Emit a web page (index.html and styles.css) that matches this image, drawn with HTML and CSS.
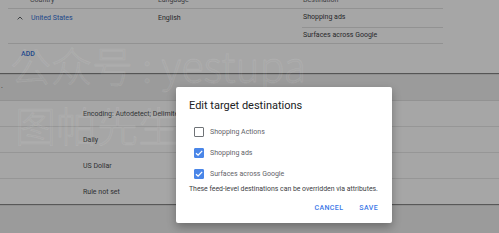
FILE: index.html
```html
<!DOCTYPE html>
<html lang="en">
<head>
<meta charset="utf-8">
<title>Edit target destinations</title>
<link rel="stylesheet" href="styles.css">
</head>
<body>
<div class="page">
  <section class="card card-top">
    <div class="grid head">
      <div class="c1 pad">Country</div>
      <div class="c2">Language</div>
      <div class="c3">Destination</div>
    </div>
    <div class="grid row">
      <div class="c1 country">
        <svg class="chev" width="6" height="4" viewBox="0 0 6 4"><path d="M0.6 3.4 L3 1 L5.4 3.4" fill="none" stroke="#5f6368" stroke-width="1"/></svg>
        <span class="link">United States</span>
      </div>
      <div class="c2 cell">English</div>
      <div class="c3 dests">
        <div class="dest first">Shopping ads</div>
        <div class="dest">Surfaces across Google</div>
      </div>
    </div>
    <div class="add">ADD</div>
  </section>
  <div class="between">.</div>
  <section class="card card-settings">
    <div class="srow">Encoding: Autodetect; Delimiter: Autodetect</div>
    <div class="srow">Daily</div>
    <div class="srow">US Dollar</div>
    <div class="srow last">Rule not set</div>
  </section>
</div>
<div class="overlay"></div>
<div class="watermark">
  <div class="wm1">公众号 : yestupa</div>
  <div class="wm2">图帕先生</div>
</div>
<div class="dialog">
  <h2 class="title">Edit target destinations</h2>
  <ul class="options">
    <li class="opt"><span class="box"></span><span>Shopping Actions</span></li>
    <li class="opt"><span class="box on"><svg width="10" height="10" viewBox="0 0 10 10"><path d="M2 5.2 L4.1 7.2 L8.2 2.9" fill="none" stroke="#fff" stroke-width="1.3"/></svg></span><span>Shopping ads</span></li>
    <li class="opt"><span class="box on"><svg width="10" height="10" viewBox="0 0 10 10"><path d="M2 5.2 L4.1 7.2 L8.2 2.9" fill="none" stroke="#fff" stroke-width="1.3"/></svg></span><span>Surfaces across Google</span></li>
  </ul>
  <p class="note">These feed-level destinations can be overridden via attributes.</p>
  <div class="actions">
    <span class="btn">CANCEL</span>
    <span class="btn">SAVE</span>
  </div>
</div>
</body>
</html>
```
FILE: styles.css
```css
html, body {
  margin: 0;
  padding: 0;
}
body {
  width: 499px;
  height: 233px;
  overflow: hidden;
  background: #eeeeee;
  font-family: Roboto, "Liberation Sans", Arial, sans-serif;
  color: #3c4043;
  font-size: 7px;
  position: relative;
}
.page {
  display: flex;
  flex-direction: column;
}
.card {
  background: #fff;
}
.card-top {
  margin-top: -8px;
  box-shadow: 0 1px 1px rgba(0,0,0,0.45);
}
.grid {
  display: grid;
  grid-template-columns: 150px 144px 141px;
  margin-left: 8px;
  width: 435px;
}
.head {
  height: 16px;
  line-height: 16px;
  border-bottom: 1px solid #e0e0e0;
  color: #5f6368;
}
.head .c1 { padding-left: 22px; }
.head .c3 { padding-left: 1px; }
.row {
  border-bottom: 1px solid #e0e0e0;
}
.country {
  display: flex;
  align-items: center;
  height: 16px;
  padding-top: 1px;
  padding-left: 9px;
  gap: 8px;
}
.chev { display: block; }
.link { color: #2f6fd6; }
.cell {
  height: 16px;
  line-height: 16px;
  padding-top: 1px;
}
.dest {
  padding-left: 1px;
  line-height: 15px;
  height: 15px;
}
.dest.first {
  height: 18px;
  line-height: 17px;
  border-bottom: 1px solid #e0e0e0;
}
.add {
  padding: 5px 0 14px 21px;
  line-height: 10px;
  color: #2f6fd6;
  font-weight: 500;
}
.between {
  height: 28px;
  line-height: 26px;
  padding-left: 1px;
  color: #3c4043;
}
.card-settings {
  box-shadow: 0 0 1px rgba(0,0,0,0.3), 0 1px 1px rgba(0,0,0,0.4);
}
.srow {
  height: 25px;
  line-height: 26px;
  padding-left: 83px;
  border-bottom: 1px solid #e6e6e6;
  color: #4a4d50;
  white-space: nowrap;
}
.srow.last { border-bottom: none; }

.overlay {
  position: absolute;
  inset: 0;
  background: rgba(0,0,0,0.35);
}
.watermark {
  position: absolute;
  left: 10px;
  top: 34px;
  font-family: "Noto Sans CJK SC", "Noto Sans", sans-serif;
  font-weight: 300;
  font-size: 41px;
  line-height: 60px;
  color: rgba(255,255,255,0.03);
  -webkit-text-stroke: 0.8px rgba(255,255,255,0.1);
  white-space: nowrap;
  pointer-events: none;
}
.wm2 { padding-left: 5px; }

.dialog {
  position: absolute;
  left: 176px;
  top: 87px;
  width: 216px;
  height: 136px;
  box-sizing: border-box;
  background: #fff;
  border-radius: 2px;
  box-shadow: 0 4px 10px rgba(0,0,0,0.3);
  display: flex;
  flex-direction: column;
  padding: 12px 13px 9px 13px;
}
.title {
  margin: 0;
  font-size: 11px;
  line-height: 14px;
  font-weight: 400;
  color: #202124;
}
.options {
  list-style: none;
  margin: 8px 0 0 5px;
  padding: 0;
}
.opt {
  display: flex;
  align-items: center;
  gap: 6px;
  height: 21px;
  color: #5f6368;
}
.box {
  width: 10px;
  height: 10px;
  box-sizing: border-box;
  border: 1px solid #6f7377;
  border-radius: 1px;
  display: flex;
}
.box.on {
  background: #4a86e8;
  border-color: #4a86e8;
}
.box.on svg { margin: -1px; }
.note {
  margin: 0;
  line-height: 10px;
  font-size: 6.9px;
  color: #3c4043;
  white-space: nowrap;
}
.actions {
  margin-top: 9px;
  padding-right: 1px;
  display: flex;
  justify-content: flex-end;
  gap: 16px;
  line-height: 10px;
}
.btn {
  color: #3b78e7;
  font-weight: 500;
  letter-spacing: 0.4px;
}
```
